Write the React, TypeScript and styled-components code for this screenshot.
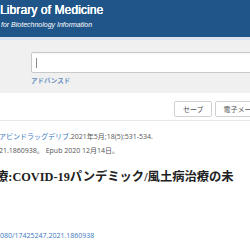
import { FC } from 'react'
import styled, { createGlobalStyle } from 'styled-components'

const GlobalStyle = createGlobalStyle`
  html, body {
    margin: 0;
    padding: 0;
    background: #ffffff;
    overflow: hidden;
  }
  body {
    width: 250px;
    height: 250px;
    font-family: 'Open Sans', 'Noto Sans CJK JP', sans-serif;
  }
`

const sans = `'Open Sans', 'Noto Sans CJK JP', sans-serif`

const App: FC = () => {
  return (
    <Page>
      <GlobalStyle />
      <Header>
        <BrandTitle>Library of Medicine</BrandTitle>
        <BrandSub>for Biotechnology Information</BrandSub>
      </Header>
      <HeaderEdge />

      <SearchSection>
        <SearchInput>
          <Caret />
        </SearchInput>
        <AdvancedLink>アドバンスド</AdvancedLink>
      </SearchSection>

      <Toolbar>
        <ToolButton>セーブ</ToolButton>
        <ToolButton>電子メール</ToolButton>
      </Toolbar>

      <Article>
        <Citation>
          <JournalLink>アビンドラッグデリブ</JournalLink>.2021年5月;18(5):531-534.
        </Citation>
        <Citation $offset={-1}>21.1860938。 Epub 2020 12月14日。</Citation>
        <Title>療:COVID-19パンデミック/風土病治療の未</Title>
        <Doi>080/17425247.2021.1860938</Doi>
      </Article>
    </Page>
  )
}

const Page = styled.div`
  width: 250px;
  height: 250px;
  overflow: hidden;
  background: #ffffff;
`

const Header = styled.header`
  height: 37px;
  box-sizing: border-box;
  padding-top: 3px;
  background: #20558a;
  color: #ffffff;
  font-family: 'Liberation Sans', Arial, sans-serif;
`

const BrandTitle = styled.div`
  font-size: 12px;
  line-height: 14px;
  letter-spacing: 0.1px;
  text-shadow: 0 0 0.6px #ffffff, 0.3px 0 0 #ffffff;
`

const BrandSub = styled.div`
  margin-top: 3px;
  padding-left: 1px;
  font-size: 7px;
  line-height: 9px;
  font-style: italic;
`

const HeaderEdge = styled.div`
  height: 3px;
  background: #dbe4ee;
`

const SearchSection = styled.section`
  height: 53px;
  box-sizing: border-box;
  padding: 12px 0 0 31px;
  background: #f0f0f0;
`

const SearchInput = styled.div`
  width: 240px;
  height: 21px;
  box-sizing: border-box;
  display: flex;
  align-items: center;
  padding-left: 4px;
  background: #ffffff;
  border: 1px solid #c9c9c9;
  border-radius: 2px 0 0 2px;
  box-shadow: inset 0 1px 1px rgba(0, 0, 0, 0.04);
`

const Caret = styled.span`
  width: 1px;
  height: 10px;
  background: #8a8a8a;
`

const AdvancedLink = styled.div`
  margin-top: 3px;
  font-family: ${sans};
  font-size: 6.5px;
  line-height: 9px;
  font-weight: 600;
  color: #6a93c0;
`

const Toolbar = styled.div`
  height: 28px;
  box-sizing: border-box;
  display: flex;
  gap: 3px;
  padding: 8px 0 0 174px;
  border-bottom: 1px solid #e8e8e8;
  white-space: nowrap;
`

const ToolButton = styled.div`
  flex-shrink: 0;
  height: 16px;
  box-sizing: border-box;
  display: flex;
  align-items: center;
  padding: 0 7px 0 8px;
  background: #ffffff;
  border: 1px solid #d0d0d0;
  border-radius: 2px;
  font-family: ${sans};
  font-size: 7px;
  color: #555555;

  & + & {
    padding: 0 12px 0 8px;
  }
`

const Article = styled.article`
  padding-top: 9px;
  font-family: ${sans};
`

const Citation = styled.div<{ $offset?: number }>`
  margin-left: ${(p) => p.$offset ?? -1}px;
  height: 14px;
  font-size: 7px;
  line-height: 14px;
  color: #555555;
  white-space: nowrap;
`

const JournalLink = styled.span`
  color: #3a79c0;
`

const Title = styled.h1`
  margin: 10px 0 0 -4px;
  font-family: 'Liberation Serif', 'Noto Sans CJK JP', serif;
  font-size: 12.3px;
  line-height: 18px;
  font-weight: 700;
  color: #212121;
  white-space: nowrap;
`

const Doi = styled.div`
  margin-top: 45px;
  font-size: 7px;
  line-height: 9px;
  color: #3a79c0;
  white-space: nowrap;
`

export default App
